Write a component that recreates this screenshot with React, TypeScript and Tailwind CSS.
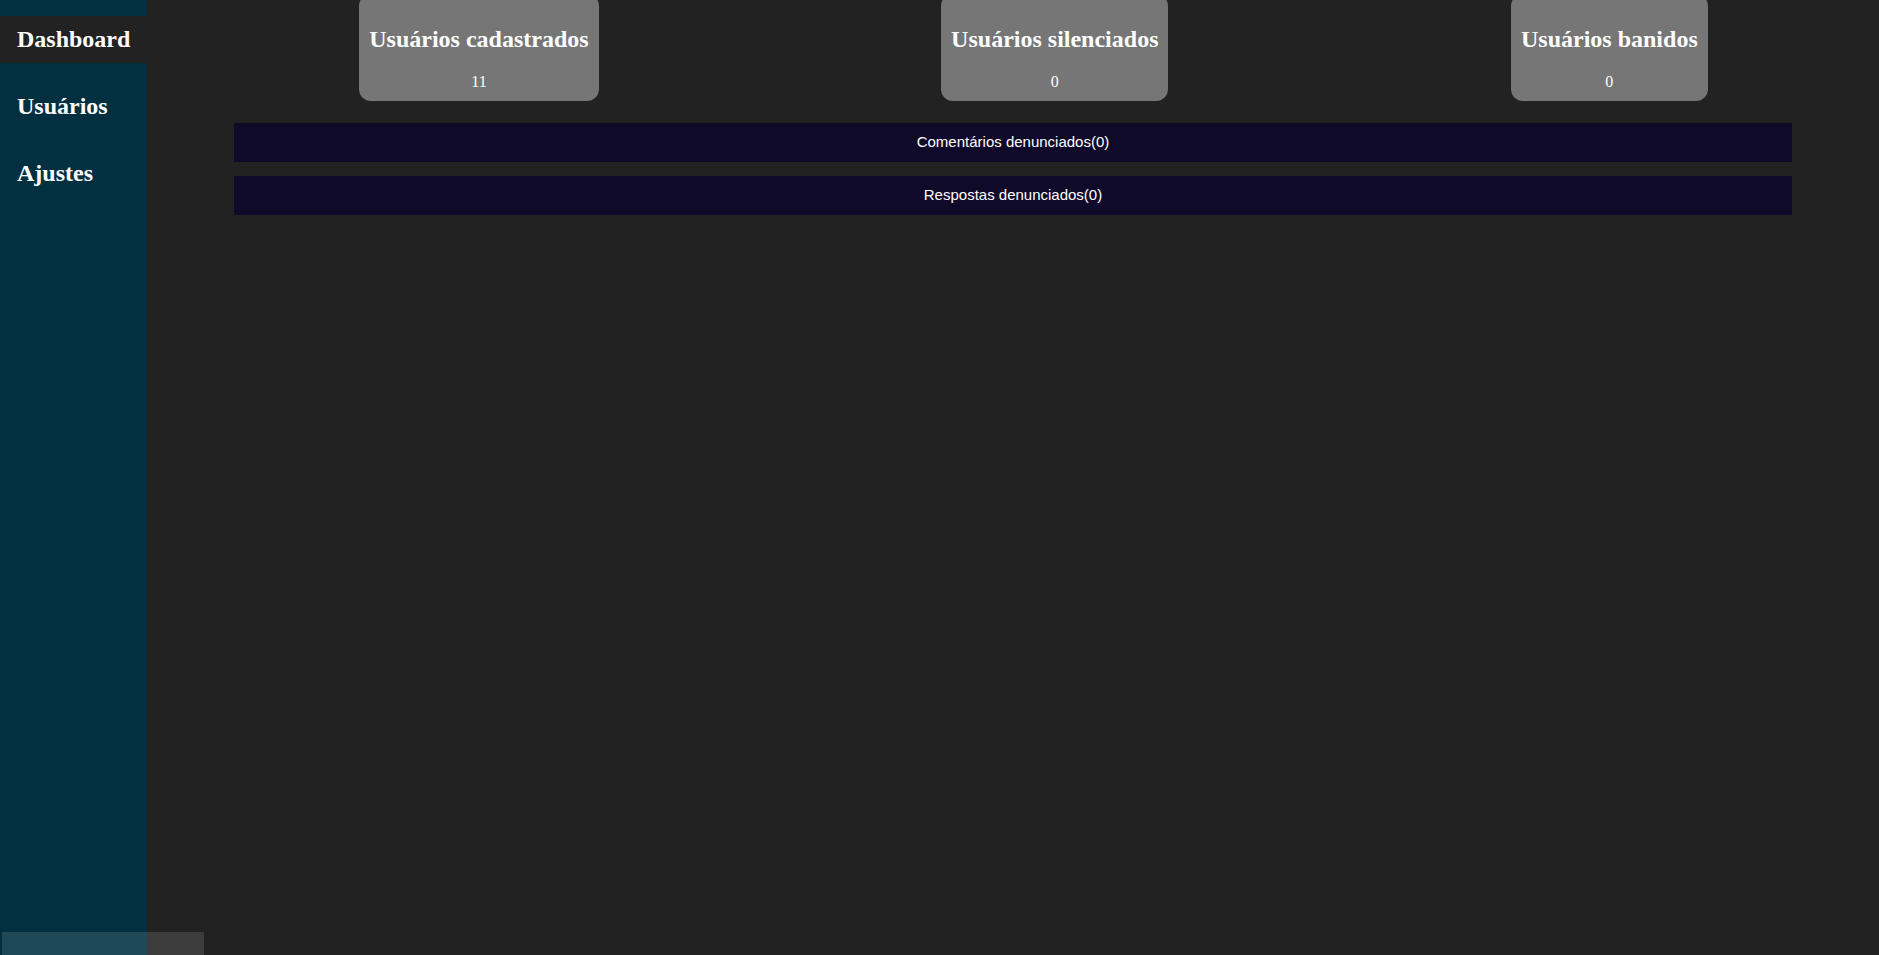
const serif = { fontFamily: '"Liberation Serif", "Times New Roman", serif' };

const stats = [
  { label: "Usuários cadastrados", value: 11 },
  { label: "Usuários silenciados", value: 0 },
  { label: "Usuários banidos", value: 0 },
];

const reports = ["Comentários denunciados(0)", "Respostas denunciados(0)"];

function Sidebar() {
  const items = ["Dashboard", "Usuários", "Ajustes"];
  return (
    <aside className="w-[147px] shrink-0 bg-[#023040] pt-4 flex flex-col gap-5">
      {items.map((item, i) => (
        <div
          key={item}
          className={`h-[47px] flex items-center pl-[17px] text-[24px] font-bold leading-[1.15] text-white ${
            i === 0 ? "bg-[#222222]" : ""
          }`}
          style={serif}
        >
          {item}
        </div>
      ))}
    </aside>
  );
}

function StatCard({ label, value }: { label: string; value: number }) {
  return (
    <div
      className="-mt-[6px] rounded-[12px] bg-[#767676] px-[10px] pt-[32px] pb-[10px] text-center text-white"
      style={serif}
    >
      <h2 className="text-[24px] font-bold leading-[1.15] mb-[19px] whitespace-nowrap">{label}</h2>
      <p className="text-[16px] leading-[1.15]">{value}</p>
    </div>
  );
}

export default function App() {
  return (
    <div className="relative h-screen w-full flex bg-[#222222] overflow-hidden">
      <Sidebar />
      <main className="flex-1 flex flex-col">
        <div className="flex justify-around pl-[41px]">
          {stats.map((s) => (
            <StatCard key={s.label} label={s.label} value={s.value} />
          ))}
        </div>
        <div className="w-[90%] mx-auto mt-[22px] flex flex-col gap-[14px]">
          {reports.map((r) => (
            <div
              key={r}
              className="h-[39px] bg-[#0f0a29] flex items-center justify-center text-[15px] text-white"
              style={{ fontFamily: '"Liberation Sans", Arial, sans-serif' }}
            >
              {r}
            </div>
          ))}
        </div>
      </main>
      <div className="absolute left-[2px] bottom-0 w-[202px] h-[23px] bg-white/[0.12]" />
    </div>
  );
}
